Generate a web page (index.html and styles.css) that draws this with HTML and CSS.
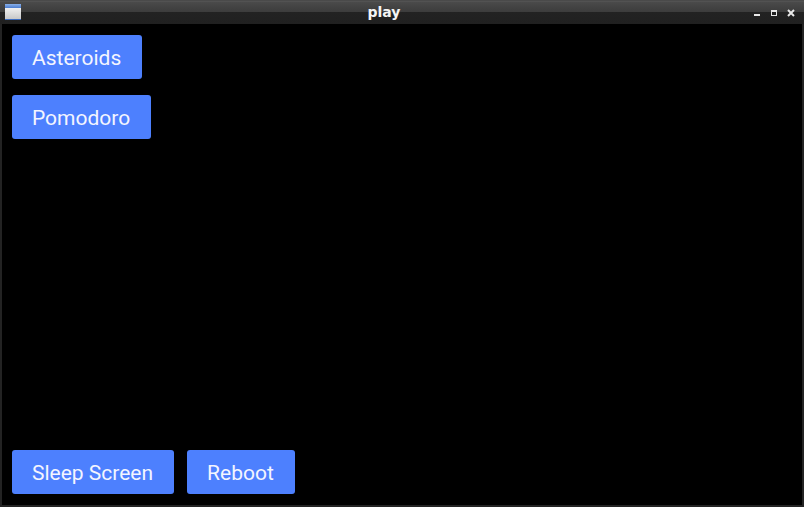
FILE: index.html
```html
<!DOCTYPE html>
<html>
<head>
<meta charset="utf-8">
<link rel="stylesheet" href="styles.css">
</head>
<body>
<div class="window">
  <div class="titlebar">
    <div class="app-icon"><div class="app-icon-top"></div><div class="app-icon-body"></div></div>
    <div class="title">play</div>
    <div class="controls">
      <svg class="ctl" width="14" height="10" viewBox="0 0 14 10"><rect x="4" y="6" width="6" height="2" fill="#e8e8e8"/></svg>
      <svg class="ctl" width="14" height="10" viewBox="0 0 14 10"><rect x="4.5" y="2.5" width="5" height="5" fill="none" stroke="#e8e8e8" stroke-width="1"/><rect x="4" y="2" width="6" height="2" fill="#e8e8e8"/></svg>
      <svg class="ctl" width="14" height="10" viewBox="0 0 14 10"><path d="M4 2 L10 8 M10 2 L4 8" stroke="#e8e8e8" stroke-width="2"/></svg>
    </div>
  </div>
  <div class="content">
    <div class="top-group">
      <button class="btn">Asteroids</button>
      <button class="btn">Pomodoro</button>
    </div>
    <div class="bottom-row">
      <button class="btn">Sleep Screen</button>
      <button class="btn">Reboot</button>
    </div>
  </div>
</div>
</body>
</html>
```
FILE: styles.css
```css
html, body {
  margin: 0;
  padding: 0;
  background: #000;
}
.window {
  width: 804px;
  height: 507px;
  box-sizing: border-box;
  display: flex;
  flex-direction: column;
  border: 2px solid #232323;
  border-top: none;
}
.titlebar {
  height: 24px;
  flex: none;
  display: flex;
  align-items: center;
  position: relative;
  background: linear-gradient(to bottom, #3a3a3a 0px, #5a5a5a 1px, #4a4a4a 2px, #3c3c3c 12px, #222222 12px, #202020 24px);
  margin: 0 -2px;
}
.app-icon {
  width: 16px;
  height: 15px;
  margin-left: 5px;
  display: flex;
  flex-direction: column;
  border-bottom: 1px solid #3a6bc0;
}
.app-icon-top {
  height: 4px;
  background: linear-gradient(to bottom, #8ab0e8, #4a7cd0);
}
.app-icon-body {
  flex: 1;
  background: linear-gradient(to bottom, #f0f0f0, #c8c8c8);
}
.title {
  flex: 1;
  text-align: center;
  font-family: "DejaVu Sans", sans-serif;
  font-weight: bold;
  font-size: 14px;
  color: #f4f4f4;
  padding-left: 1px;
  margin-right: 4px;
}
.controls {
  display: flex;
  align-items: center;
  gap: 3px;
  margin-right: 6px;
  margin-top: 1px;
}
.ctl {
  display: block;
}
.content {
  flex: 1;
  display: flex;
  flex-direction: column;
  justify-content: space-between;
  padding: 11px 10px 11px 10px;
}
.top-group {
  display: flex;
  flex-direction: column;
  align-items: flex-start;
  gap: 16px;
}
.bottom-row {
  display: flex;
  gap: 13px;
}
.btn {
  height: 44px;
  border: none;
  border-radius: 3px;
  background: #4d80fe;
  color: #f3f5ff;
  font-family: Roboto, "Noto Sans", sans-serif;
  font-size: 21px;
  padding: 2px 21px 0 20px;
  margin: 0;
  line-height: 42px;
}
```
